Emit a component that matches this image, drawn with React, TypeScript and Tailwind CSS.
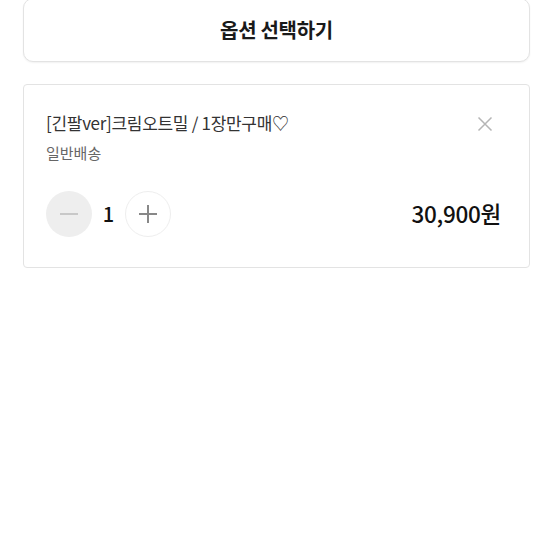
export default function App() {
  return (
    <div
      className="w-[553px] h-[553px] bg-white overflow-hidden px-[23px] text-[#222]"
      style={{ fontFamily: '"Noto Sans CJK KR", "Noto Sans", sans-serif' }}
    >
      <button className="mt-[-2px] w-full h-[64px] flex items-center justify-center rounded-[10px] border border-[#e3e3e3] bg-white shadow-[0_1px_2px_rgba(0,0,0,0.06)]">
        <span className="text-[20px] font-semibold tracking-[-0.3px] text-[#1a1a1a]">옵션 선택하기</span>
      </button>

      <div className="mt-[22px] h-[184px] rounded-[4px] border border-[#e3e3e3] pl-[22px] pr-[28px] pt-[24px]">
        <div className="flex items-start justify-between">
          <p className="text-[17px] leading-[28px] tracking-[-0.3px] text-[#333]">
            [긴팔ver]크림오트밀 / 1장만구매♡
          </p>
          <button className="mt-[7px] mr-[8px] text-[#b5b5b5]">
            <svg width="16" height="16" viewBox="0 0 16 16" fill="none" stroke="currentColor" strokeWidth="1.5">
              <path d="M1.5 1.5L14.5 14.5M14.5 1.5L1.5 14.5" />
            </svg>
          </button>
        </div>
        <p className="mt-[5px] text-[15px] leading-[22px] text-[#666]">일반배송</p>

        <div className="mt-[27px] flex items-center justify-between">
          <div className="flex items-center">
            <button className="w-[46px] h-[46px] rounded-full bg-[#eeeeee] flex items-center justify-center text-[#c8c8c8]">
              <svg width="20" height="20" viewBox="0 0 20 20" stroke="currentColor" strokeWidth="2">
                <path d="M1 10H19" />
              </svg>
            </button>
            <span className="w-[33px] text-center text-[20px] font-medium text-[#111]">1</span>
            <button className="w-[46px] h-[46px] rounded-full bg-white border border-[#eeeeee] flex items-center justify-center text-[#888]">
              <svg width="20" height="20" viewBox="0 0 20 20" stroke="currentColor" strokeWidth="2">
                <path d="M1 10H19M10 1V19" />
              </svg>
            </button>
          </div>
          <span className="text-[22.5px] font-medium tracking-[-0.3px] text-[#111]">30,900원</span>
        </div>
      </div>
    </div>
  );
}
